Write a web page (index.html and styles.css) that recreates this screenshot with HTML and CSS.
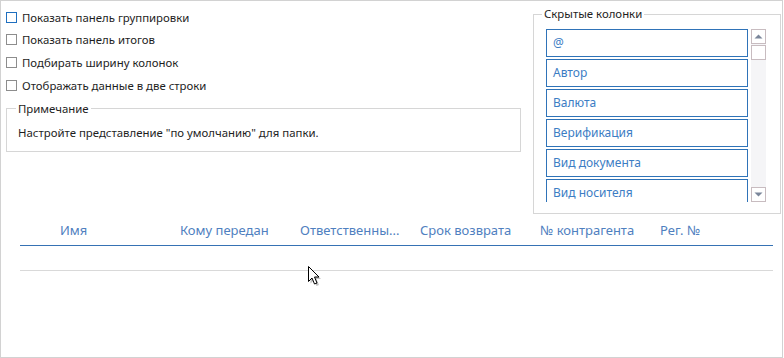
FILE: index.html
```html
<!DOCTYPE html>
<html lang="ru">
<head>
    <meta charset="UTF-8">
    <title>Настройка представления</title>
    <link rel="stylesheet" href="styles.css">
</head>
<body>
    <div class="window">
        <div class="top">
            <div class="left">
                <div class="options">
                    <label class="option"><span class="box focused"></span>Показать панель группировки</label>
                    <label class="option"><span class="box"></span>Показать панель итогов</label>
                    <label class="option"><span class="box"></span>Подбирать ширину колонок</label>
                    <label class="option"><span class="box"></span>Отображать данные в две строки</label>
                </div>
                <fieldset class="group note">
                    <legend>Примечание</legend>
                    <p>Настройте представление "по умолчанию" для папки.</p>
                </fieldset>
            </div>
            <fieldset class="group hidden-cols">
                <legend>Скрытые колонки</legend>
                <div class="list-wrap">
                    <div class="list">
                        <div class="item">@</div>
                        <div class="item">Автор</div>
                        <div class="item">Валюта</div>
                        <div class="item">Верификация</div>
                        <div class="item">Вид документа</div>
                        <div class="item">Вид носителя</div>
                    </div>
                    <div class="scrollbar">
                        <div class="sb-btn"><svg width="9" height="5" viewBox="0 0 9 5"><path d="M0.5 4.5 L4.5 0.5 L8.5 4.5 Z" fill="#7a869a"/></svg></div>
                        <div class="sb-thumb"></div>
                        <div class="sb-space"></div>
                        <div class="sb-btn"><svg width="9" height="5" viewBox="0 0 9 5"><path d="M0.5 0.5 L8.5 0.5 L4.5 4.5 Z" fill="#7a869a"/></svg></div>
                    </div>
                </div>
            </fieldset>
        </div>

        <div class="grid">
            <div class="grid-head">
                <span class="col">Имя</span>
                <span class="col">Кому передан</span>
                <span class="col">Ответственны...</span>
                <span class="col">Срок возврата</span>
                <span class="col">№ контрагента</span>
                <span class="col">Рег. №</span>
            </div>
            <div class="grid-row"></div>
        </div>

        <svg class="cursor" width="14" height="22" viewBox="0 0 14 22">
            <path d="M2.5 2.5 L2.5 17.5 L6 14 L8.5 20 L11 19 L8.5 13 L13 13 Z" fill="#000" opacity="0.25" transform="translate(1 1)"/>
            <path d="M1.5 1.5 L1.5 16.5 L5 13 L7.5 19 L10 18 L7.5 12 L12 12 Z" fill="#fff" stroke="#000" stroke-width="1" stroke-linejoin="miter"/>
        </svg>
    </div>
</body>
</html>
```

FILE: styles.css
```css
body {
    margin: 0;
    font-family: "Noto Sans", "Open Sans", sans-serif;
    font-size: 11.4px;
    color: #1e1e1e;
    background: #fff;
}
.window {
    position: relative;
    box-sizing: border-box;
    width: 783px;
    height: 358px;
    border: 1px solid #d2d2d2;
    background: #fff;
}
.top {
    display: flex;
    align-items: flex-start;
}
.left {
    width: 515px;
    padding: 5px 0 0 5px;
}
.options {
    display: flex;
    flex-direction: column;
}
.option {
    display: flex;
    align-items: center;
    height: 22.67px;
}
.box {
    box-sizing: border-box;
    width: 11px;
    height: 11px;
    border: 1px solid #8d8d8d;
    margin-right: 5px;
    background: #fff;
}
.box.focused {
    border-color: #1f6fbf;
}
.group {
    margin: 0;
    border: 1px solid #d6d6d6;
    min-width: 0;
}
.group legend {
    padding: 0 2px;
    line-height: 14px;
}
.note {
    margin-top: 5px;
    height: 50px;
    box-sizing: border-box;
    padding: 7px 11px 0;
}
.note legend {
    margin-left: -2px;
}
.note p {
    margin: 2px 0 0;
}
.hidden-cols {
    margin: 6px 0 0 12px;
    width: 248px;
    height: 207px;
    box-sizing: border-box;
    padding: 8px 12px 0 12px;
}
.hidden-cols legend {
    margin-left: -4px;
}
.list-wrap {
    display: flex;
    gap: 3px;
    height: 173px;
    overflow: hidden;
}
.list {
    display: flex;
    flex-direction: column;
    gap: 2px;
    width: 202px;
}
.item {
    flex: none;
    box-sizing: border-box;
    height: 28px;
    border: 1px solid #2f73b8;
    color: #3c7dc4;
    padding: 0 6px;
    line-height: 26px;
    font-size: 12px;
}
.scrollbar {
    width: 15px;
    background: #f5f5f7;
    display: flex;
    flex-direction: column;
}
.sb-btn, .sb-thumb {
    box-sizing: border-box;
    width: 15px;
    height: 15px;
    border: 1px solid #c8bcc0;
    background: #fff;
    display: flex;
    align-items: center;
    justify-content: center;
}
.sb-thumb {
    margin-top: 1px;
}
.sb-space {
    flex: 1;
}
.grid {
    margin: 1px 9px 0 19px;
}
.grid-head {
    display: flex;
    padding-left: 40px;
    height: 30px;
    align-items: center;
    border-bottom: 1px solid #3672b4;
}
.col {
    flex: none;
    width: 120px;
    color: #4f80c0;
    font-size: 13px;
}
.grid-row {
    height: 24px;
    border-bottom: 1px solid #d9d9d9;
}
.cursor {
    position: absolute;
    left: 306px;
    top: 264px;
}
```
